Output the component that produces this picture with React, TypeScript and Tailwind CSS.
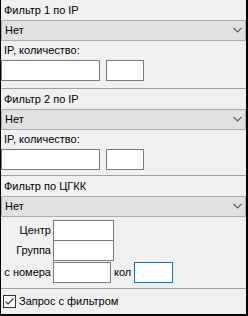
import React from "react";

function Combo({ value }: { value: string }) {
  return (
    <div className="h-[21px] flex items-center justify-between bg-[#e1e1e1] border border-[#adadad] pl-[3px] pr-[3px]">
      <span>{value}</span>
      <svg width="9" height="6" viewBox="0 0 9 6" className="mb-[1px]">
        <polyline points="0.5,1 4.5,5 8.5,1" fill="none" stroke="#606060" strokeWidth="1.2" />
      </svg>
    </div>
  );
}

function TextBox({ className, focused }: { className: string; focused?: boolean }) {
  return (
    <input
      type="text"
      className={`h-[21px] bg-white border outline-none ${
        focused ? "border-[#0078d7]" : "border-[#7a7a7a]"
      } ${className}`}
    />
  );
}

function Separator() {
  return <div className="h-px bg-[#a0a0a0]" />;
}

function IpFilter({ title, tail }: { title: string; tail: string }) {
  return (
    <div className="flex flex-col">
      <div className="h-[20px] flex items-center pl-[3px]">{title}</div>
      <Combo value="Нет" />
      <div className="h-[19px] flex items-center pl-[3px]">IP, количество:</div>
      <div className="flex gap-[6px]">
        <TextBox className="w-[99px]" />
        <TextBox className="w-[38px]" />
      </div>
      <div className={tail} />
      <Separator />
    </div>
  );
}

export default function App() {
  return (
    <div className="w-[248px] h-[316px] bg-[#f0f0f0] border-l border-r-2 border-b-2 border-black flex flex-col text-[11px] text-black font-['Liberation_Sans',Arial,sans-serif] overflow-hidden">
      <IpFilter title="Фильтр 1 по IP" tail="h-[7px]" />
      <IpFilter title="Фильтр 2 по IP" tail="h-[5px]" />

      <div className="flex flex-col">
        <div className="h-[20px] flex items-center pl-[3px]">Фильтр по ЦГКК</div>
        <Combo value="Нет" />
        <div className="h-[3px]" />
        <div className="flex items-center">
          <span className="w-[52px] text-right pr-[2px]">Центр</span>
          <TextBox className="w-[61px]" />
        </div>
        <div className="flex items-center -mt-px">
          <span className="w-[52px] text-right pr-[2px]">Группа</span>
          <TextBox className="w-[61px]" />
        </div>
        <div className="flex items-center mt-px">
          <span className="w-[52px] text-right pr-[2px]">с номера</span>
          <TextBox className="w-[58px]" />
          <span className="ml-[3px] w-[20px]">кол</span>
          <TextBox className="w-[39px]" focused />
        </div>
        <div className="h-[5px]" />
        <Separator />
      </div>

      <label className="h-[24px] flex items-center pl-[2px] gap-[3px]">
        <span className="w-[13px] h-[13px] bg-white border border-[#333333] flex items-center justify-center">
          <svg width="11" height="11" viewBox="0 0 11 11">
            <polyline points="1.5,5.5 4,8 9.5,2.5" fill="none" stroke="#333333" strokeWidth="1.1" />
          </svg>
        </span>
        <span>Запрос с фильтром</span>
      </label>
    </div>
  );
}
